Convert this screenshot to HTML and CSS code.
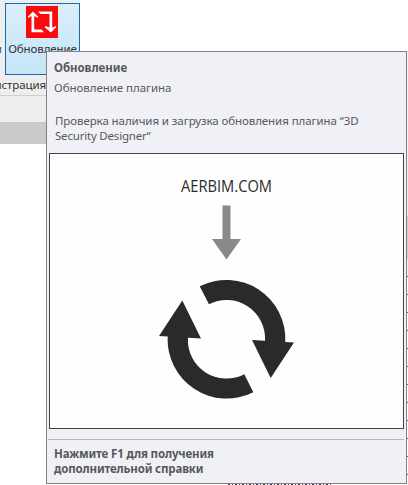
FILE: index.html
```
<!DOCTYPE html>
<html lang="ru">
<head>
<meta charset="utf-8">
<title>Обновление</title>
<link rel="stylesheet" href="styles.css">
</head>
<body>
<main class="app">
  <section class="ribbon">
    <span class="neighbour">и</span>
    <button class="update">
      <svg class="update-icon" width="32" height="32" viewBox="0 0 32 32">
        <path fill="#ff080c" d="M0 0h32v32H0z"/>
        <path fill="#fff" d="M7 5.500 12 10.500V12L8.200 10V23.500H15.500L18 26.200H5.500V10L2 12V10.500Z"/>
        <path fill="#fff" d="M12 5.500H26.200V21.500L30 20V21.500L24.800 26.500 19 21.500V20L23.500 21.500V8H14.500Z"/>
      </svg>
      <span>Обновление</span>
    </button>
    <span class="panel-name">истрация</span>
  </section>
  <div class="ribbon-foot"></div>
  <div class="tabbar"></div>
  <div class="ruler"><i class="shade"></i><i class="ticks"></i></div>
  <div class="hidden-row"></div>
  <aside class="tooltip">
    <header class="intro">
      <h1>Обновление</h1>
      <p class="summary">Обновление плагина</p>
      <p class="details"><span class="details-1">Проверка наличия и загрузка обновления плагина “3D</span><br><span class="details-2">Security Designer“</span></p>
    </header>
    <figure class="picture">
      <svg width="353" height="274" viewBox="50 154 353 274">
        <text class="site" x="181" y="192" textLength="91" lengthAdjust="spacingAndGlyphs">AERBIM.COM</text>
        <path fill="#898989" d="M222.500 205.500h8V239H241l-14.500 20.500L212 239h10.500z"/>
        <g fill="#2b2a29">
          <path d="M199.700 286.300A59 59 0 0 1 285.300 342L294 342.500 270.700 378 252 340 265 340.700A38.500 38.500 0 0 0 209 304.300Z"/>
          <path d="M253.300 392.200A59 59 0 0 1 167.700 336.500L159 336 182.300 300.500 201 338.500 188 337.800A38.500 38.500 0 0 0 244.300 374.200Z"/>
        </g>
      </svg>
    </figure>
    <footer class="help">Нажмите F1 для получения<br>дополнительной справки</footer>
  </aside>
</main>
</body>
</html>
```
FILE: styles.css
```
* { box-sizing: border-box; }
body { margin: 0; background: #fff; font: 11.500px/15px "Noto Sans", "Open Sans", sans-serif; color: #4c4c50; }
.app { position: relative; width: 408px; height: 485px; overflow: hidden; }
.ribbon { display: grid; grid-template-columns: 5px 75px; grid-template-rows: 75px 20px; width: 80px; height: 95px; background: #eee; white-space: nowrap; }
.neighbour { padding-top: 41px; direction: rtl; width: 2px; overflow: hidden; }
.update { margin: 3px 0 0; padding: 2px 0 0; height: 72px; border: 1px solid #1768b5; background: linear-gradient(#daeef9, #c4e5f6); font: inherit; color: #333; display: flex; flex-direction: column; align-items: center; gap: 3px; letter-spacing: -.1px; }
.update-icon { flex: none; margin-right: 1px; }
.panel-name { grid-column: 1 / 3; justify-self: start; width: 46px; margin-top: 2px; direction: rtl; overflow: hidden; letter-spacing: -.1px; color: #333; }
.ribbon-foot { width: 80px; height: 27px; border-top: 1px solid #cfcfcf; background: #eee; }
.tabbar { width: 80px; height: 22px; background: #cacaca; }
.ruler { position: absolute; right: 0; top: 51px; width: 1px; height: 434px; background: #f2f2f2; }
.shade { display: block; margin-top: 165px; height: 43px; background: #d0d0d0; }
.ticks { display: block; margin-top: 17px; height: 209px; background: repeating-linear-gradient(#666 0 1px, #fff 1px 18px); }
.hidden-row { position: absolute; left: 228px; top: 484px; width: 103px; height: 1px; background: repeating-linear-gradient(90deg, #435 0 2px, #fff 2px 4px, #655 4px 5px, #fff 5px 7px); }
.tooltip { position: absolute; left: 46px; top: 51px; width: 361px; height: 433px; border: 1px solid #808085; background: #f0f1f7; color: #58585b; white-space: nowrap; }
.intro { height: 101px; padding: 8px 7px 0; }
h1 { margin: 0; font-size: inherit; line-height: 15px; font-weight: 700; letter-spacing: -.05px; }
p { margin: 0; }
.summary { margin-top: 5px; letter-spacing: -.05px; }
.details { margin: 18px 0 0 1px; }
.details-1 { letter-spacing: -.08px; }
.details-2 { letter-spacing: -.2px; }
.picture { margin: 0 0 0 2px; width: 355px; height: 276px; border: 1px solid #414146; background: #fefefe; }
.picture svg { display: block; }
.site { font: 16.500px "Open Sans", sans-serif; fill: #2b2a29; }
.help { margin: 10px 2px 0 1px; padding: 6px 0 0 6px; border-top: 1px solid #b8b8ba; font-weight: 700; letter-spacing: -.15px; }
```
